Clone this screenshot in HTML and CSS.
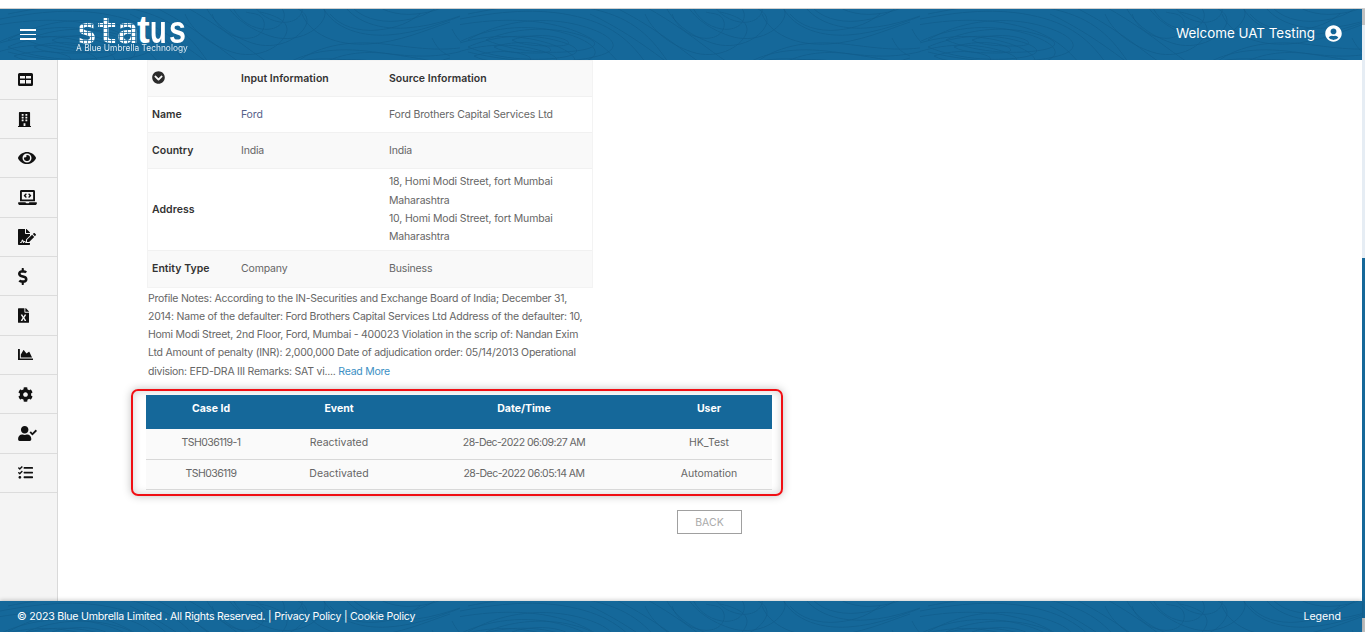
FILE: index.html
```html
<!DOCTYPE html>
<html lang="en">
<head>
<meta charset="utf-8">
<title>Status</title>
<link rel="stylesheet" href="styles.css">
</head>
<body>
<svg class="defs" width="0" height="0" aria-hidden="true">
  <defs>
    <g id="contour-lines" fill="none" stroke="#0f5c8b" stroke-width=".7">
      <path d="M-10 38C20 20 60 14 96 22S150 46 120 54 40 62 -10 50"/>
      <path d="M8 38C30 28 62 24 90 30S126 44 104 48 42 52 8 38Z"/>
      <path d="M34 38C48 33 68 32 82 36S92 44 78 44 44 44 34 38Z"/>
      <path d="M-10 12C30 4 70 -2 110 6S170 30 190 60"/>
      <path d="M150 -4C176 8 200 24 224 42S248 58 252 64"/>
      <path d="M205 -4C212 12 228 26 252 34S300 30 306 16 290 -4 280 -6"/>
      <path d="M232 -4C236 8 248 18 262 20S286 14 284 4 270 -4 266 -6"/>
      <path d="M274 64C296 44 330 38 366 42S430 52 470 40"/>
      <path d="M300 64C320 52 344 48 372 52S420 60 440 64"/>
      <path d="M322 -4C330 16 356 28 388 26S446 12 470 4"/>
      <path d="M350 -4C360 8 378 14 398 12S430 4 440 -4"/>
      <path d="M452 20C456 28 460 34 470 38"/>
    </g>
    <pattern id="contour" width="460" height="60" patternUnits="userSpaceOnUse">
      <use href="#contour-lines"/>
      <use href="#contour-lines" transform="translate(18 -7)"/>
      <use href="#contour-lines" transform="translate(-20 9)"/>
    </pattern>
  </defs>
</svg>

<div class="top-strip"></div>

<div class="shell">
  <div class="app">
    <header class="header">
      <svg class="texture" aria-hidden="true"><rect width="100%" height="100%" fill="url(#contour)"/></svg>
      <button class="menu" aria-label="Menu"><span></span><span></span><span></span></button>
      <div class="logo">
        <div class="logo-word"><span class="px">sta</span><span class="solid t2">t</span><span class="solid u1">u</span><span class="solid s2">s</span></div>
        <div class="logo-tag">A Blue Umbrella Technology</div>
      </div>
      <div class="user">
        <span class="welcome">Welcome UAT Testing</span>
        <svg class="user-icon" viewBox="0 0 496 512"><path d="M248 8C111 8 0 119 0 256s111 248 248 248 248-111 248-248S385 8 248 8zm0 96c48.6 0 88 39.4 88 88s-39.4 88-88 88-88-39.4-88-88 39.4-88 88-88zm0 344c-58.7 0-111.3-26.6-146.5-68.2 18.8-35.4 55.6-59.8 98.5-59.8 2.4 0 4.8.4 7.1 1.1 13 4.2 26.6 6.9 40.9 6.9 14.3 0 28-2.7 40.9-6.9 2.3-.7 4.7-1.1 7.1-1.1 42.9 0 79.7 24.4 98.5 59.8C359.3 421.4 306.7 448 248 448z"/></svg>
      </div>
    </header>

    <div class="body">
      <nav class="side">
        <a class="side-item"><svg class="i-table" viewBox="0 0 15 13"><path fill-rule="evenodd" d="M1.5 0h12A1.5 1.5 0 0 1 15 1.500v10a1.500 1.500 0 0 1-1.500 1.500h-12A1.500 1.500 0 0 1 0 11.500v-10A1.500 1.500 0 0 1 1.500 0zM2 3v2.500h5V3zM8 3v2.500h5V3zM2 7v3.500h5V7zM8 7v3.500h5V7z"/></svg></a>
        <a class="side-item"><svg class="i-building" viewBox="0 0 448 512"><path d="M436 480h-20V24c0-13.255-10.745-24-24-24H56C42.745 0 32 10.745 32 24v456H12c-6.627 0-12 5.373-12 12v20h448v-20c0-6.627-5.373-12-12-12zM128 76c0-6.627 5.373-12 12-12h40c6.627 0 12 5.373 12 12v40c0 6.627-5.373 12-12 12h-40c-6.627 0-12-5.373-12-12V76zm0 96c0-6.627 5.373-12 12-12h40c6.627 0 12 5.373 12 12v40c0 6.627-5.373 12-12 12h-40c-6.627 0-12-5.373-12-12v-40zm52 148h-40c-6.627 0-12-5.373-12-12v-40c0-6.627 5.373-12 12-12h40c6.627 0 12 5.373 12 12v40c0 6.627-5.373 12-12 12zm76 160h-64v-84c0-6.627 5.373-12 12-12h40c6.627 0 12 5.373 12 12v84zm64-172c0 6.627-5.373 12-12 12h-40c-6.627 0-12-5.373-12-12v-40c0-6.627 5.373-12 12-12h40c6.627 0 12 5.373 12 12v40zm0-96c0 6.627-5.373 12-12 12h-40c-6.627 0-12-5.373-12-12v-40c0-6.627 5.373-12 12-12h40c6.627 0 12 5.373 12 12v40zm0-96c0 6.627-5.373 12-12 12h-40c-6.627 0-12-5.373-12-12V76c0-6.627 5.373-12 12-12h40c6.627 0 12 5.373 12 12v40z"/></svg></a>
        <a class="side-item"><svg class="i-eye" viewBox="0 0 576 512"><path d="M572.52 241.4C518.29 135.59 410.93 64 288 64S57.68 135.64 3.48 241.41a32.35 32.35 0 0 0 0 29.19C57.71 376.41 165.07 448 288 448s230.32-71.64 284.52-177.41a32.35 32.35 0 0 0 0-29.19zM288 400a144 144 0 1 1 144-144 143.93 143.93 0 0 1-144 144zm0-240a95.31 95.31 0 0 0-25.31 3.79 47.85 47.85 0 0 1-66.9 66.9A95.78 95.78 0 1 0 288 160z"/></svg></a>
        <a class="side-item"><svg class="i-laptop" viewBox="0 0 640 512"><path d="M255.03 261.65c6.25 6.25 16.38 6.25 22.63 0l11.31-11.31c6.25-6.25 6.25-16.38 0-22.63L253.25 192l35.71-35.72c6.25-6.25 6.25-16.38 0-22.63l-11.31-11.31c-6.25-6.25-16.38-6.25-22.63 0l-58.34 58.34c-6.25 6.25-6.25 16.38 0 22.63l58.35 58.34zm96.01-11.3l11.31 11.31c6.25 6.25 16.38 6.25 22.63 0l58.34-58.34c6.25-6.25 6.25-16.38 0-22.63l-58.34-58.34c-6.25-6.25-16.38-6.25-22.63 0l-11.31 11.31c-6.25 6.25-6.25 16.38 0 22.63L386.75 192l-35.71 35.72c-6.25 6.25-6.25 16.38 0 22.63zM624 416H381.54c-.74 19.81-14.71 32-32.74 32H288c-18.69 0-33.02-17.47-32.77-32H16c-8.8 0-16 7.2-16 16v16c0 35.2 28.8 64 64 64h512c35.2 0 64-28.8 64-64v-16c0-8.8-7.2-16-16-16zM576 48c0-26.4-21.6-48-48-48H112C85.6 0 64 21.6 64 48v336h512V48zm-64 272H128V64h384v256z"/></svg></a>
        <a class="side-item"><svg class="i-sign" viewBox="0 0 576 512"><path d="M218.17 424.14c-2.95-5.92-8.09-6.52-10.17-6.52s-7.22.59-10.02 6.19l-7.67 15.34c-6.37 12.78-25.03 11.37-29.48-2.09L144 386.59l-10.61 31.88c-5.89 17.66-22.38 29.53-41 29.53H80c-8.84 0-16-7.16-16-16s7.16-16 16-16h12.39c4.83 0 9.11-3.08 10.64-7.66l18.19-54.64c3.3-9.81 12.44-16.41 22.78-16.41s19.48 6.59 22.77 16.41l13.88 41.64c19.75-16.19 54.06-9.7 66 14.16 1.89 3.78 5.49 5.95 9.36 6.26v-82.12l128-127.09V160H248c-13.2 0-24-10.8-24-24V0H24C10.7 0 0 10.7 0 24v464c0 13.3 10.7 24 24 24h336c13.3 0 24-10.7 24-24v-40l-128-.11c-16.12-.31-30.58-9.28-37.83-23.75zM384 121.9c0-6.3-2.5-12.4-7-16.9L279.1 7c-4.5-4.5-10.6-7-17-7H256v128h128v-6.1zm-96 225.06V416h68.99l161.68-162.78-67.88-67.88L288 346.96zm280.54-179.63l-31.87-31.87c-9.94-9.94-26.07-9.94-36.01 0l-27.25 27.25 67.88 67.88 27.25-27.25c9.95-9.94 9.95-26.07 0-36.01z"/></svg></a>
        <a class="side-item"><svg class="i-dollar" viewBox="0 0 288 512"><path d="M209.2 233.4l-108-31.6C88.7 198.2 80 186.5 80 173.5c0-16.3 13.2-29.5 29.5-29.5h66.3c12.2 0 24.2 3.7 34.2 10.5 6.1 4.1 14.3 3.1 19.5-2l34.8-34c7.1-6.9 6.1-18.4-1.8-24.5C238 74.8 207.4 64.1 176 64V16c0-8.8-7.2-16-16-16h-32c-8.8 0-16 7.2-16 16v48h-2.5C45.8 64-5.4 118.7.5 183.6c4.2 46.1 39.4 83.6 83.8 96.6l102.5 30c12.5 3.7 21.2 15.3 21.2 28.3 0 16.3-13.2 29.5-29.5 29.5h-66.3C100 368 88 364.3 78 357.5c-6.1-4.1-14.3-3.1-19.5 2l-34.8 34c-7.1 6.9-6.1 18.4 1.8 24.5 24.5 19.2 55.1 29.9 86.5 30v48c0 8.8 7.2 16 16 16h32c8.8 0 16-7.2 16-16v-48.2c46.6-.9 90.3-28.6 105.7-72.7 21.5-61.6-14.6-124.8-72.5-141.7z"/></svg></a>
        <a class="side-item"><svg class="i-excel" viewBox="0 0 384 512"><path d="M224 136V0H24C10.7 0 0 10.7 0 24v464c0 13.3 10.7 24 24 24h336c13.3 0 24-10.7 24-24V160H248c-13.2 0-24-10.8-24-24zm60.1 106.500L224 336l60.100 93.500c5.100 8-.6 18.500-10.100 18.500h-34.900c-4.400 0-8.500-2.400-10.600-6.300C208.900 405.500 192 373 192 373c-6.400 14.800-10 20-36.600 68.800-2.100 3.900-6.100 6.300-10.500 6.300H110c-9.500 0-15.200-10.500-10.100-18.500l60.300-93.500-60.300-93.500c-5.200-8 .6-18.500 10.100-18.500h34.800c4.400 0 8.500 2.400 10.600 6.300 26.100 48.800 20 33.600 36.600 68.500 0 0 6.100-11.700 36.600-68.500 2.100-3.900 6.200-6.300 10.600-6.300H274c9.500-.1 15.200 10.400 10.100 18.400zM384 121.900v6.100H256V0h6.100c6.400 0 12.500 2.500 17 7l97.900 98c4.500 4.500 7 10.600 7 16.900z"/></svg></a>
        <a class="side-item"><svg class="i-chart" viewBox="0 64 512 384"><path d="M500 384c6.600 0 12 5.400 12 12v40c0 6.600-5.400 12-12 12H12c-6.600 0-12-5.400-12-12V76c0-6.600 5.400-12 12-12h40c6.600 0 12 5.400 12 12v308h436zM372.700 159.500L288 216l-85.300-113.700c-5.100-6.800-15.500-6.300-19.900 1L96 248v104h384l-89.900-187.800c-3.200-6.500-11.400-8.700-17.400-4.700z"/></svg></a>
        <a class="side-item"><svg class="i-cog" viewBox="0 0 512 512"><path d="M487.400 315.700l-42.600-24.600c4.300-23.200 4.300-47 0-70.200l42.600-24.600c4.900-2.800 7.100-8.600 5.500-14-11.100-35.600-30-67.800-54.700-94.600-3.800-4.100-10-5.100-14.800-2.300L380.800 110c-17.900-15.400-38.500-27.300-60.800-35.100V25.800c0-5.600-3.900-10.500-9.400-11.700-36.700-8.200-74.300-7.800-109.200 0-5.500 1.200-9.400 6.100-9.400 11.700V75c-22.200 7.900-42.800 19.800-60.800 35.100L88.700 85.500c-4.900-2.800-11-1.900-14.800 2.300-24.700 26.700-43.600 58.900-54.700 94.600-1.700 5.400.6 11.200 5.500 14L67.300 221c-4.300 23.200-4.300 47 0 70.200l-42.600 24.600c-4.900 2.800-7.100 8.600-5.500 14 11.100 35.600 30 67.800 54.700 94.600 3.800 4.100 10 5.100 14.800 2.300l42.600-24.600c17.900 15.400 38.500 27.300 60.800 35.100v49.200c0 5.600 3.900 10.500 9.400 11.700 36.700 8.200 74.300 7.800 109.200 0 5.500-1.200 9.400-6.100 9.400-11.700v-49.200c22.200-7.900 42.800-19.800 60.800-35.100l42.600 24.600c4.900 2.800 11 1.900 14.800-2.300 24.700-26.700 43.600-58.900 54.700-94.600 1.500-5.500-.7-11.300-5.600-14.100zM256 336c-44.100 0-80-35.900-80-80s35.900-80 80-80 80 35.900 80 80-35.900 80-80 80z"/></svg></a>
        <a class="side-item"><svg class="i-user" viewBox="0 0 640 512"><path d="M224 256c70.700 0 128-57.300 128-128S294.700 0 224 0 96 57.300 96 128s57.300 128 128 128zm89.600 32h-16.700c-22.200 10.200-46.900 16-72.900 16s-50.600-5.800-72.900-16h-16.700C60.200 288 0 348.200 0 422.400V464c0 26.500 21.500 48 48 48h352c26.500 0 48-21.500 48-48v-41.600c0-74.200-60.200-134.400-134.400-134.400zm323-128.400l-27.800-28.100c-4.600-4.700-12.100-4.700-16.800-.1l-104.800 104-45.500-45.800c-4.600-4.700-12.100-4.700-16.800-.1l-28.100 27.900c-4.700 4.600-4.700 12.100-.1 16.800l81.700 82.300c4.600 4.700 12.100 4.700 16.800.1l141.300-140.200c4.600-4.700 4.700-12.200.1-16.800z"/></svg></a>
        <a class="side-item"><svg class="i-tasks" viewBox="0 32 512 440"><path d="M139.610 35.500a12 12 0 0 0-17 0L58.930 98.810l-22.700-22.120a12 12 0 0 0-17 0L3.530 92.410a12 12 0 0 0 0 17l47.590 47.400a12.780 12.780 0 0 0 17.610 0l15.590-15.620L156.520 69a12.090 12.090 0 0 0 .09-17zm0 159.190a12 12 0 0 0-17 0l-63.680 63.720-22.700-22.100a12 12 0 0 0-17 0L3.530 252a12 12 0 0 0 0 17L51 316.500a12.770 12.770 0 0 0 17.600 0l15.700-15.690 72.200-72.220a12 12 0 0 0 .09-16.900zM64 368c-26.490 0-48.590 21.500-48.590 48S37.530 464 64 464a48 48 0 0 0 0-96zm432 16H208a16 16 0 0 0-16 16v32a16 16 0 0 0 16 16h288a16 16 0 0 0 16-16v-32a16 16 0 0 0-16-16zm0-320H208a16 16 0 0 0-16 16v32a16 16 0 0 0 16 16h288a16 16 0 0 0 16-16V80a16 16 0 0 0-16-16zm0 160H208a16 16 0 0 0-16 16v32a16 16 0 0 0 16 16h288a16 16 0 0 0 16-16v-32a16 16 0 0 0-16-16z"/></svg></a>
      </nav>

      <main class="content">
        <table class="info">
          <colgroup><col class="c1"><col class="c2"><col class="c3"></colgroup>
          <tr class="alt head">
            <th><svg class="chev" viewBox="0 0 512 512"><path d="M504 256c0 137-111 248-248 248S8 393 8 256 119 8 256 8s248 111 248 248zM273 369.900l135.500-135.500c9.400-9.400 9.400-24.600 0-33.900l-17-17c-9.400-9.400-24.600-9.400-33.900 0L256 285.100 154.400 183.500c-9.400-9.400-24.600-9.400-33.900 0l-17 17c-9.400 9.400-9.400 24.600 0 33.900L239 369.900c9.400 9.400 24.600 9.400 34 0z"/></svg></th>
            <th>Input Information</th>
            <th>Source Information</th>
          </tr>
          <tr class="r36"><th>Name</th><td class="link">Ford</td><td>Ford Brothers Capital Services Ltd</td></tr>
          <tr class="alt r36"><th>Country</th><td>India</td><td>India</td></tr>
          <tr class="addr"><th>Address</th><td></td><td>18, Homi Modi Street, fort Mumbai<br>Maharashtra<br>10, Homi Modi Street, fort Mumbai<br>Maharashtra</td></tr>
          <tr class="alt r37"><th>Entity Type</th><td>Company</td><td>Business</td></tr>
        </table>

        <p class="notes">Profile Notes: According to the IN-Securities and Exchange Board of India; December 31,<br>2014: Name of the defaulter: Ford Brothers Capital Services Ltd Address of the defaulter: 10,<br>Homi Modi Street, 2nd Floor, Ford, Mumbai - 400023 Violation in the scrip of: Nandan Exim<br>Ltd Amount of penalty (INR): 2,000,000 Date of adjudication order: 05/14/2013 Operational<br>division: EFD-DRA III Remarks: SAT vi.... <a class="more">Read More</a></p>

        <section class="history-card">
          <table class="history">
            <colgroup><col class="h1"><col class="h2"><col class="h3"><col class="h4"></colgroup>
            <tr><th>Case Id</th><th>Event</th><th>Date/Time</th><th>User</th></tr>
            <tr><td class="num">TSH036119-1</td><td>Reactivated</td><td class="num">28-Dec-2022 06:09:27 AM</td><td>HK_Test</td></tr>
            <tr><td class="num">TSH036119</td><td>Deactivated</td><td class="num">28-Dec-2022 06:05:14 AM</td><td>Automation</td></tr>
          </table>
        </section>

        <button class="back">BACK</button>
      </main>
    </div>

    <footer class="footer">
      <svg class="texture" aria-hidden="true"><rect width="100%" height="100%" fill="url(#contour)"/></svg>
      <div class="legal">© 2023 Blue Umbrella Limited . All Rights Reserved. | Privacy Policy | Cookie Policy</div>
      <div class="legend">Legend</div>
    </footer>
  </div>

  <div class="scrollbar"><div class="sb-cap"></div><div class="sb-track"></div><div class="sb-thumb"></div><div class="sb-end"></div></div>
</div>
</body>
</html>
```

FILE: styles.css
```css
* { box-sizing: border-box; }
html, body { margin: 0; height: 100%; overflow: hidden; }
body {
  display: flex;
  flex-direction: column;
  height: 632px;
  background: #fff;
  font-family: Inter, "Open Sans", "Liberation Sans", sans-serif;
  font-size: 10.5px;
  color: #666;
}
.defs { position: absolute; }
.top-strip { flex: 0 0 9px; border-bottom: 1px solid #cfcfcf; background: #fff; }
.shell { flex: 1; display: flex; min-height: 0; }
.app { flex: 1; display: flex; flex-direction: column; min-width: 0; }

.scrollbar { flex: 0 0 3px; display: flex; flex-direction: column; }
.sb-cap { flex: 0 0 16px; background: #c1c1c1; }
.sb-track { flex: 0 0 233px; background: #e6edf4; }
.sb-thumb { flex: 1; background: #15689a; }
.sb-end { flex: 0 0 14px; background: #c1c1c1; }

.header, .footer { position: relative; background: #15689a; color: #fff; display: flex; align-items: center; }
.header { flex: 0 0 51px; }
.footer { flex: 0 0 31px; justify-content: space-between; padding: 0 21px 0 17px; font-size: 10.6px; letter-spacing: -.22px; box-shadow: 0 -1px 4px rgba(0,0,0,.2); }
.legend { letter-spacing: 0; }
.texture { position: absolute; inset: 0; width: 100%; height: 100%; pointer-events: none; }
.header > :not(.texture), .footer > :not(.texture) { position: relative; }

.menu { display: flex; flex-direction: column; gap: 2.800px; width: 16px; margin: 0 0 0 20px; padding: 0; background: none; border: 0; }
.menu span { display: block; height: 1.500px; background: #fff; }

.logo { margin-left: 40px; width: 112px; align-self: flex-start; margin-top: 8px; }
.logo-word { display: flex; height: 27px; font-family: "Liberation Sans", sans-serif; font-weight: 700; font-size: 38px; line-height: 27px; }
.px {
  width: 61px;
  font-family: "DejaVu Sans Mono", monospace;
  font-size: 36px;
  letter-spacing: -1.300px;
  color: transparent;
  background-image: repeating-linear-gradient(90deg, transparent 0 3px, rgba(21,104,154,.75) 3px 4px), repeating-linear-gradient(0deg, transparent 0 3px, rgba(21,104,154,.75) 3px 4px), linear-gradient(#fff, #fff);
  -webkit-background-clip: text;
  background-clip: text;
}
.t2 { width: 15px; }
.u1 { width: 19px; transform: scaleX(.72); transform-origin: left; }
.s2 { transform: scaleX(.8); transform-origin: left; }
.logo-tag { font-size: 8.400px; line-height: 9px; white-space: nowrap; opacity: .85; }

.user { margin-left: auto; margin-right: 20px; margin-bottom: 2px; display: flex; align-items: center; gap: 10px; }
.welcome { font-size: 13.400px; margin-bottom: 2px; margin-left: -1px; }
.user-icon { width: 17px; height: 17px; fill: #fff; }

.body { flex: 1; display: flex; min-height: 0; }
.side { flex: 0 0 58px; background: #f4f4f4; border-right: 1px solid #d9d9d9; padding-top: .6px; }
.side-item { display: flex; align-items: center; height: 39.300px; padding-left: 18px; border-bottom: 1px solid #dcdcdc; }
.side-item svg { fill: #111; display: block; }
.i-table { width: 15px; height: 13px; }
.i-building { width: 13px; height: 15px; }
.i-eye { width: 18px; height: 16px; }
.i-laptop { width: 19px; height: 15px; }
.i-sign { width: 18px; height: 16px; }
.i-dollar { width: 9.500px; height: 17px; }
.i-excel { width: 11px; height: 15px; }
.i-chart { width: 15px; height: 11.300px; }
.i-cog { width: 15px; height: 15px; }
.i-user { width: 19px; height: 15px; }
.i-tasks { width: 15px; height: 13px; }

.content { flex: 1; padding-left: 89px; min-width: 0; }
table { border-collapse: collapse; table-layout: fixed; }
.info { width: 446px; outline: 1px solid #f3f3f3; outline-offset: -1px; letter-spacing: -.16px; }
.c1 { width: 94px; } .c2 { width: 148px; }
.info th, .info td { padding: 2px 5px 0 0; text-align: left; vertical-align: middle; border-bottom: 1px solid #f1f1f1; white-space: nowrap; line-height: 18.300px; }
.info th:first-child { padding-left: 5px; }
.info th { font-weight: 600; color: #333; letter-spacing: .03px; }
.alt { background: #f9f9f9; }
.head { height: 36px; }
.r36 { height: 36px; }
.r37 { height: 37px; }
.addr { height: 82px; }
.chev { display: block; width: 13px; height: 13px; fill: #2b2b2b; margin-top: -3px; }
.link { color: #55608a; }

.notes { margin: 2px 0 0 1px; line-height: 18.300px; white-space: nowrap; letter-spacing: -.24px; }
.more { color: #3b8fc4; }

.history-card {
  width: 652px;
  margin: 8px 0 0 -16px;
  padding: 4px 9px 4px 13px;
  border: 2px solid #f00f14;
  border-radius: 7px;
  box-shadow: 0 0 8px rgba(0,0,0,.25), inset 0 0 8px rgba(0,0,0,.18);
}
.history { width: 626px; }
.h1 { width: 130px; } .h2 { width: 126px; } .h3 { width: 244px; } .h4 { width: 126px; }
.history th { height: 34px; padding: 0 0 7px; background: #15689a; color: #fff; font-weight: 700; text-align: center; }
.history td { height: 30.500px; padding: 0 0 2px; background: #fafafa; text-align: center; border-bottom: 1px solid #d8d8d8; }
.history td.num { letter-spacing: -.55px; }

.back { display: block; width: 65px; height: 24px; margin: 14px 0 0 530px; padding: 0; background: #fff; border: 1px solid #a0a0a0; color: #aaa; font: inherit; }

.legal, .legend { white-space: nowrap; }
```
